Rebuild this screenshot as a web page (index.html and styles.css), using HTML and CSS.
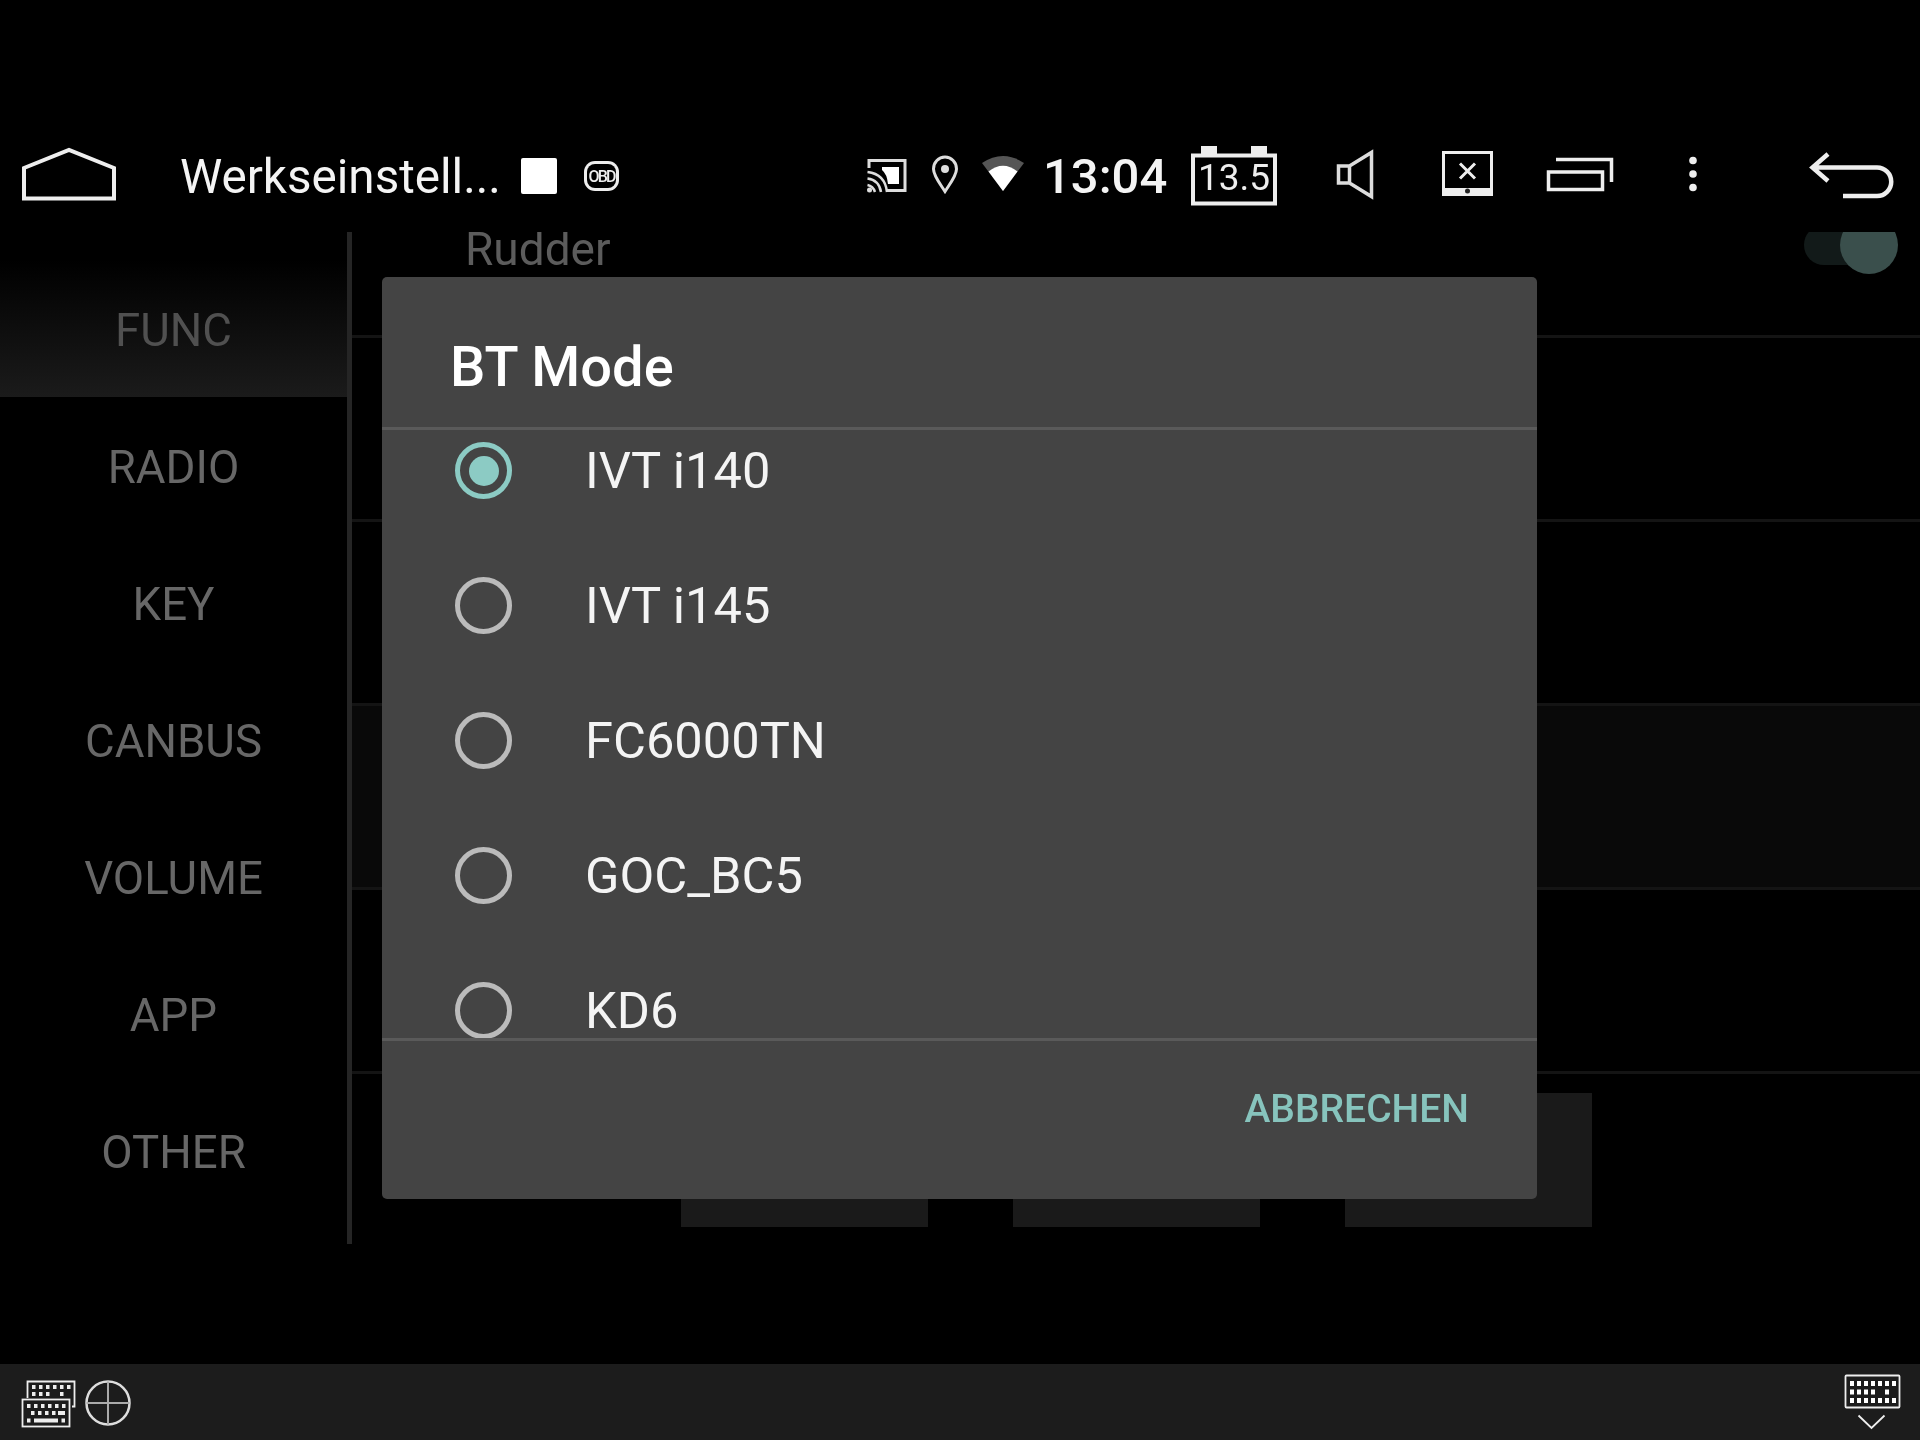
FILE: index.html
```html
<!DOCTYPE html>
<html lang="de">
<head>
<meta charset="utf-8">
<title>BT Mode</title>
<link rel="stylesheet" href="styles.css">
</head>
<body>
<div class="screen">
  <header class="statusbar">
    <svg class="ico home" width="100" viewBox="20 120 100 112"><path d="M24 198.500V168L69 150L114 168V198.500Z" fill="none" stroke="#eee" stroke-width="4"/></svg>
    <span class="apptitle">Werkseinstell...</span>
    <span class="stopbox"></span>
    <span class="obd"><span class="obd-inner">OBD</span></span>
    <svg class="ico cast" width="40" viewBox="867 120 40 112"><path d="M869 168V160.500H905V190.500H886" fill="none" stroke="#ddd" stroke-width="3"/><path d="M882 167H899V184H888Q887 174 882 170Z" fill="#fff"/><g fill="none" stroke="#ddd" stroke-width="2.500"><path d="M867.500 172Q885 174 887 192"/><path d="M867.500 178.500Q879 180 881 192"/><path d="M867.500 185Q873 186 875 192"/></g><circle cx="869.500" cy="190" r="2.500" fill="#ddd"/></svg>
    <svg class="ico pin" width="26" viewBox="932 120 26 112"><path d="M945 191.500C941 185 933.500 176 933.500 169A11.500 12 0 0 1 956.500 169C956.500 176 949 185 945 191.500Z" fill="none" stroke="#ddd" stroke-width="3"/><circle cx="945" cy="169" r="4" fill="#ddd"/></svg>
    <svg class="ico wifi" width="42" viewBox="982 120 42 112"><path d="M982 163Q1003 149 1024 163L1003 191Z" fill="#555"/><path d="M988.500 171.500Q1003 160 1017.500 171.500L1003 191Z" fill="#fff"/></svg>
    <span class="clock">13:04</span>
    <svg class="ico battery" width="86" viewBox="1191 120 86 112"><rect x="1193" y="155.500" width="82" height="48" fill="none" stroke="#eee" stroke-width="4"/><rect x="1201" y="146" width="16" height="10" fill="#eee"/><rect x="1251" y="146" width="16" height="10" fill="#eee"/><text class="volt" x="1234" y="190" text-anchor="middle">13.5</text></svg>
    <svg class="ico speaker" width="36" viewBox="1337 120 36 112"><path d="M1338.500 166H1349.500L1371.500 152.500V196.500L1349.500 183H1338.500ZM1349.500 166V183" fill="none" stroke="#ddd" stroke-width="3.500"/></svg>
    <svg class="ico screenx" width="51" viewBox="1442 120 51 112"><rect x="1443.500" y="152.500" width="48" height="42" fill="none" stroke="#eee" stroke-width="3"/><rect x="1443" y="188" width="49" height="8" fill="#eee"/><circle cx="1467.500" cy="191" r="2.500" fill="#222"/><path d="M1460 163.500L1475 178.500M1475 163.500L1460 178.500" stroke="#eee" stroke-width="3"/></svg>
    <svg class="ico recents" width="66" viewBox="1547 120 66 112"><rect x="1548.500" y="172" width="54" height="17.500" fill="none" stroke="#eee" stroke-width="3.500"/><path d="M1556 159.500H1611.500V182" fill="none" stroke="#eee" stroke-width="3.500"/></svg>
    <svg class="ico dots" width="8" viewBox="1689 120 8 112"><circle cx="1693" cy="160.500" r="3.800" fill="#eee"/><circle cx="1693" cy="174" r="3.800" fill="#eee"/><circle cx="1693" cy="187.500" r="3.800" fill="#eee"/></svg>
    <svg class="ico back" width="83" viewBox="1810 120 83 112"><path d="M1828 154L1812.500 167.500L1828 181M1812.500 167.500H1877A14 14 0 0 1 1877 196H1843" fill="none" stroke="#eee" stroke-width="4.500"/></svg>
  </header>

  <main class="main">
    <nav class="sidebar">
      <div class="tab tab-on">FUNC</div>
      <div class="tab">RADIO</div>
      <div class="tab">KEY</div>
      <div class="tab">CANBUS</div>
      <div class="tab">VOLUME</div>
      <div class="tab">APP</div>
      <div class="tab">OTHER</div>
    </nav>
    <div class="rule"></div>
    <section class="content">
      <div class="row row-first">
        <span class="row-label">Rudder</span>
        <span class="toggle"><span class="toggle-thumb"></span></span>
      </div>
      <div class="row"></div>
      <div class="row"></div>
      <div class="row row-shade"></div>
      <div class="row"></div>
      <div class="btnrow">
        <span class="ghostbtn"></span>
        <span class="ghostbtn"></span>
        <span class="ghostbtn"></span>
      </div>
    </section>
  </main>

  <footer class="footer">
    <svg class="fico" width="115" viewBox="20 1364 115 76">
      <g fill="none" stroke="#eee" stroke-width="1.800"><path d="M27.500 1398V1381.500H74.500V1406.500H72"/><rect x="22.500" y="1399.500" width="47" height="27"/></g>
      <g fill="#eee"><rect x="32" y="1385" width="3.500" height="4"/><rect x="39" y="1385" width="3.500" height="4"/><rect x="46" y="1385" width="3.500" height="4"/><rect x="53" y="1385" width="3.500" height="4"/><rect x="60" y="1385" width="3.500" height="4"/><rect x="67" y="1385" width="3.500" height="4"/><rect x="32" y="1392" width="3.500" height="4"/><rect x="39" y="1392" width="3.500" height="4"/><rect x="46" y="1392" width="3.500" height="4"/><rect x="60" y="1392" width="3.500" height="4"/>
      <rect x="27" y="1404" width="3.500" height="4"/><rect x="34" y="1404" width="3.500" height="4"/><rect x="41" y="1404" width="3.500" height="4"/><rect x="48" y="1404" width="3.500" height="4"/><rect x="55" y="1404" width="3.500" height="4"/><rect x="62" y="1404" width="3.500" height="4"/><rect x="31" y="1411" width="3.500" height="4"/><rect x="38" y="1411" width="3.500" height="4"/><rect x="45" y="1411" width="3.500" height="4"/><rect x="52" y="1411" width="3.500" height="4"/><rect x="58" y="1411" width="7" height="4"/><rect x="27" y="1418.500" width="3.500" height="4"/><rect x="34" y="1418.500" width="24" height="4"/><rect x="61.500" y="1418.500" width="3.500" height="4"/></g>
      <circle cx="108" cy="1403" r="21.500" fill="none" stroke="#ddd" stroke-width="2.500"/>
      <path d="M108 1381.500V1424.500M86.500 1403H129.500" stroke="#aaa" stroke-width="2"/>
    </svg>
    <svg class="fico fico-right" width="65" viewBox="1840 1364 65 76">
      <rect x="1845.500" y="1375.500" width="54" height="32" rx="1" fill="none" stroke="#eee" stroke-width="1.800"/>
      <g fill="#fff"><rect x="1850" y="1381" width="4" height="5"/><rect x="1857" y="1381" width="4" height="5"/><rect x="1864" y="1381" width="4" height="5"/><rect x="1871" y="1381" width="4" height="5"/><rect x="1878" y="1381" width="4" height="5"/><rect x="1885" y="1381" width="4" height="5"/><rect x="1892" y="1381" width="4" height="5"/><rect x="1850" y="1389.500" width="4" height="5"/><rect x="1857" y="1389.500" width="4" height="5"/><rect x="1864" y="1389.500" width="4" height="5"/><rect x="1871" y="1389.500" width="4" height="5"/><rect x="1885" y="1389.500" width="4" height="5"/><rect x="1850" y="1398" width="4" height="5"/><rect x="1857" y="1398" width="4" height="5"/><rect x="1864" y="1398" width="4" height="5"/><rect x="1871" y="1398" width="4" height="5"/><rect x="1878" y="1398" width="4" height="5"/><rect x="1885" y="1398" width="4" height="5"/><rect x="1892" y="1398" width="4" height="5"/></g>
      <path d="M1858.500 1415.500L1871.500 1428L1884.500 1415.500" fill="none" stroke="#eee" stroke-width="1.800"/>
    </svg>
  </footer>

  <div class="dialog">
    <h2 class="dialog-title">BT Mode</h2>
    <div class="dialog-list">
      <div class="opt"><span class="radio radio-on"><span class="radio-dot"></span></span><span class="opt-label">IVT i140</span></div>
      <div class="opt"><span class="radio"></span><span class="opt-label">IVT i145</span></div>
      <div class="opt"><span class="radio"></span><span class="opt-label">FC6000TN</span></div>
      <div class="opt"><span class="radio"></span><span class="opt-label">GOC_BC5</span></div>
      <div class="opt"><span class="radio"></span><span class="opt-label">KD6</span></div>
    </div>
    <div class="dialog-actions"><span class="cancel">ABBRECHEN</span></div>
  </div>
</div>
</body>
</html>
```

FILE: styles.css
```css
* { box-sizing: border-box; }
html, body { margin: 0; padding: 0; background: #000; }
body { font-family: Roboto, "Liberation Sans", sans-serif; }

.screen {
  position: relative;
  width: 1920px;
  height: 1440px;
  display: flex;
  flex-direction: column;
  padding-top: 120px;
  background: #000;
  overflow: hidden;
  filter: blur(0.6px);
}

/* status bar */
.statusbar {
  flex: none;
  height: 112px;
  display: flex;
  align-items: center;
  padding-left: 20px;
  color: #fff;
}
.ico { flex: none; height: 112px; overflow: visible; display: block; }
.apptitle { flex: none; width: 340px; margin-left: 60px; margin-right: 1px; font-size: 47.6px; white-space: nowrap; color: #f4f4f4; line-height: 112px; padding-top: 2px; }
.stopbox { flex: none; width: 36px; height: 36px; background: #fff; border-radius: 2px; }
.obd { flex: none; width: 35px; height: 30px; margin-left: 27px; padding: 3px; background: #eee; border-radius: 11px; }
.obd-inner { display: flex; align-items: center; justify-content: center; width: 100%; height: 100%; background: #000; border-radius: 8px; color: #eee; font-size: 16px; font-weight: 500; letter-spacing: -1.8px; }
.cast { margin-left: 248px; }
.pin { margin-left: 25px; }
.wifi { margin-left: 24px; }
.clock { flex: none; width: 122px; margin-left: 19px; margin-right: 2px; font-size: 49px; font-weight: 500; white-space: nowrap; color: #f4f4f4; padding-top: 1px; }
.battery { margin-left: 24px; }
.volt { font-family: Roboto, sans-serif; font-size: 37px; fill: #eee; }
.speaker { margin-left: 60px; }
.screenx { margin-left: 69px; }
.recents { margin-left: 54px; }
.dots { margin-left: 76px; }
.back { margin-left: 113px; }

/* main */
.main { flex: none; height: 1012px; display: flex; align-items: flex-start; }
.sidebar { flex: none; width: 347px; padding-top: 28px; }
.tab {
  height: 137px;
  display: flex;
  align-items: center;
  justify-content: center;
  padding-top: 3px;
  font-size: 45.6px;
  color: #676767;
}
.tab-on {
  color: #505050;
  background: linear-gradient(180deg, #000 0%, #1b1b1b 100%);
}
.rule { flex: none; width: 5px; height: 1012px; background: #252525; }
.content { flex: 1; height: 995px; overflow: hidden; }
.row {
  height: 184px;
  display: flex;
  align-items: center;
  justify-content: space-between;
  border-bottom: 3px solid #141414;
}
.row-first { margin-top: -78px; padding: 0 40px 0 113px; }
.row-label { font-size: 46px; line-height: 36px; color: #5c5c5c; margin-top: 8px; }
.row-shade { background: #090909; }
.toggle { position: relative; width: 76px; height: 40px; background: #121a19; border-radius: 20px; }
.toggle-thumb { position: absolute; right: -18px; top: -9px; width: 58px; height: 58px; border-radius: 50%; background: #3a4f4c; }
.btnrow { display: flex; gap: 85px; padding: 19px 0 0 329px; }
.ghostbtn { flex: none; width: 247px; height: 135px; background: #1a1a1a; }

/* footer */
.footer {
  flex: none;
  height: 76px;
  margin-top: auto;
  display: flex;
  justify-content: space-between;
  padding: 0 15px 0 20px;
  background: #1c1c1c;
}
.fico { display: block; height: 76px; flex: none; }

/* dialog */
.dialog {
  position: absolute;
  left: 382px;
  top: 277px;
  width: 1155px;
  height: 922px;
  background: #444;
  border-radius: 5px;
  display: flex;
  flex-direction: column;
  color: #fff;
}
.dialog-title {
  flex: none;
  height: 153px;
  margin: 0;
  padding: 30px 0 0 68px;
  display: flex;
  align-items: center;
  font-size: 56px;
  font-weight: 500;
  border-bottom: 3px solid #5a5a5a;
}
.dialog-list {
  flex: none;
  height: 611px;
  overflow: hidden;
  border-bottom: 3px solid #5a5a5a;
}
.opt {
  height: 135px;
  display: flex;
  align-items: center;
  padding-left: 73px;
  font-size: 50.6px;
}
.opt:first-child { margin-top: -27px; }
.radio {
  flex: none;
  width: 57px;
  height: 57px;
  border: 5px solid #bbb;
  border-radius: 50%;
  display: flex;
  align-items: center;
  justify-content: center;
}
.radio-on { border-color: #8ccbc4; }
.radio-dot { width: 30px; height: 30px; border-radius: 50%; background: #8ccbc4; }
.opt-label { margin-left: 73px; color: #f4f4f4; }
.dialog-actions { flex: 1; display: flex; justify-content: flex-end; padding: 46px 68px 0 0; }
.cancel { font-size: 39px; font-weight: 500; color: #87c4bd; line-height: 44px; }
```
